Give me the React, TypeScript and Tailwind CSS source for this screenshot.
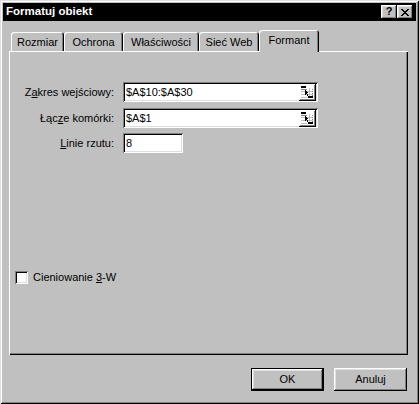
import React from 'react';

const raised =
  'shadow-[inset_-1px_-1px_0_#000000,inset_1px_1px_0_#ffffff,inset_-2px_-2px_0_#808080,inset_2px_2px_0_#dfdfdf]';
const sunken =
  'shadow-[inset_1px_1px_0_#808080,inset_-1px_-1px_0_#ffffff,inset_2px_2px_0_#000000,inset_-2px_-2px_0_#dfdfdf]';

const tabs = [
  { label: 'Rozmiar', w: 'w-[53px]' },
  { label: 'Ochrona', w: 'w-[59px]' },
  { label: 'Właściwości', w: 'w-[76px]' },
  { label: 'Sieć Web', w: 'w-[60px]' },
];

const PickerIcon = () => (
  <svg width="17" height="17" viewBox="0 0 17 17" shapeRendering="crispEdges">
    <rect x="0" y="0" width="17" height="17" fill="#ffffff" />
    <rect x="16" y="0" width="1" height="17" fill="#000000" />
    <rect x="0" y="16" width="17" height="1" fill="#000000" />
    <rect x="15" y="1" width="1" height="15" fill="#808080" />
    <rect x="1" y="15" width="15" height="1" fill="#808080" />
    <rect x="2" y="7" width="12" height="1" fill="#c0c0c0" />
    <rect x="2" y="10" width="12" height="1" fill="#c0c0c0" />
    <rect x="2" y="13" width="6" height="1" fill="#c0c0c0" />
    <rect x="10" y="4" width="1" height="10" fill="#c0c0c0" />
    <rect x="13" y="5" width="1" height="1" fill="#808080" />
    <rect x="13" y="7" width="1" height="1" fill="#808080" />
    <rect x="13" y="9" width="1" height="1" fill="#808080" />
    <rect x="13" y="11" width="1" height="1" fill="#808080" />
    <rect x="2" y="2" width="5" height="2" fill="#000000" />
    <rect x="2" y="5" width="6" height="1" fill="#808080" />
    <path d="M6 6 L6 11 L7.3 9.8 L8.5 12 L9.5 11.5 L8.4 9.3 L10 9.3 Z" fill="#000000" />
    <rect x="9" y="12" width="5" height="2" fill="#000000" />
  </svg>
);

const Field = ({
  label,
  value,
  width,
  picker,
}: {
  label: React.ReactNode;
  value: string;
  width: string;
  picker?: boolean;
}) => (
  <div className="flex items-center h-[20px]">
    <div className="w-[106px] text-right pr-[1px]">{label}</div>
    <div className={`ml-[8px] h-[20px] ${width} bg-white ${sunken} flex items-center pl-[3px] pr-[2px]`}>
      <span className="flex-1 leading-none">{value}</span>
      {picker && (
        <span className="flex items-center">
          <PickerIcon />
        </span>
      )}
    </div>
  </div>
);

export default function App() {
  return (
    <div
      className={`w-[419px] h-[404px] bg-[#c0c0c0] p-[3px] flex flex-col text-[11px] text-black font-['Liberation_Sans',Arial,sans-serif] shadow-[inset_1px_1px_0_#dfdfdf,inset_-1px_-1px_0_#000000,inset_2px_2px_0_#ffffff,inset_-2px_-2px_0_#808080]`}
    >
      {/* Title bar */}
      <div className="h-[18px] bg-black flex items-center pl-[3px] pr-[3px]">
        <span className="flex-1 text-white font-bold text-[11.5px] leading-none">Formatuj obiekt</span>
        <div className={`w-[16px] h-[14px] bg-[#c0c0c0] ${raised} flex items-center justify-center font-bold text-[11px] leading-none pb-[1px]`}>
          ?
        </div>
        <div className={`w-[16px] h-[14px] bg-[#c0c0c0] ${raised} flex items-center justify-center`}>
          <svg width="8" height="7" viewBox="0 0 8 7" shapeRendering="crispEdges">
            <path d="M0 0h2v1h1v1h2v-1h1v-1h2v1h-1v1h-1v1h-1v1h1v1h1v1h1v1h-2v-1h-1v-1h-2v1h-1v1h-2v-1h1v-1h1v-1h1v-1h-1v-1h-1v-1h-1z" fill="#000000" />
          </svg>
        </div>
      </div>

      {/* Tabs */}
      <div className="flex items-end h-[21px] mt-[9px] pl-[8px]">
        {tabs.map((t) => (
          <div
            key={t.label}
            className={`h-[19px] ${t.w} flex items-center justify-center pt-[1px] rounded-tl-[3px] rounded-tr-[3px] shadow-[inset_1px_1px_0_#ffffff,inset_-1px_0_0_#000000,inset_-2px_0_0_#808080]`}
          >
            {t.label}
          </div>
        ))}
        <div className="relative z-10 h-[22px] w-[60px] mb-[-1px] bg-[#c0c0c0] flex items-center justify-center pb-[2px] rounded-tl-[3px] rounded-tr-[3px] shadow-[inset_1px_1px_0_#ffffff,inset_-1px_0_0_#000000,inset_-2px_0_0_#808080]">
          Formant
        </div>
      </div>

      {/* Panel */}
      <div className="ml-[6px] mr-[8px] h-[304px] flex flex-col shadow-[inset_1px_1px_0_#ffffff,inset_-1px_-1px_0_#000000,inset_-2px_-2px_0_#808080]">
        <div className="mt-[31px]">
          <Field
            label={
              <>
                Z<span className="underline">a</span>kres wejściowy:
              </>
            }
            value="$A$10:$A$30"
            width="w-[195px]"
            picker
          />
        </div>
        <div className="mt-[6px]">
          <Field
            label={
              <>
                Łąc<span className="underline">z</span>e komórki:
              </>
            }
            value="$A$1"
            width="w-[195px]"
            picker
          />
        </div>
        <div className="mt-[5px]">
          <Field
            label={
              <>
                <span className="underline">L</span>inie rzutu:
              </>
            }
            value="8"
            width="w-[60px]"
          />
        </div>

        <div className="mt-[118px] ml-[6px] flex items-center h-[13px]">
          <div className={`w-[13px] h-[13px] bg-white ${sunken}`} />
          <span className="ml-[5px]">
            Cieniowanie <span className="underline">3</span>-W
          </span>
        </div>
      </div>

      {/* Buttons */}
      <div className="mt-[13px] flex justify-end gap-[10px] pr-[9px]">
        <div className="w-[73px] h-[23px] border border-black">
          <div className={`w-full h-full flex items-center justify-center ${raised}`}>OK</div>
        </div>
        <div className={`w-[73px] h-[23px] flex items-center justify-center ${raised}`}>Anuluj</div>
      </div>
    </div>
  );
}
